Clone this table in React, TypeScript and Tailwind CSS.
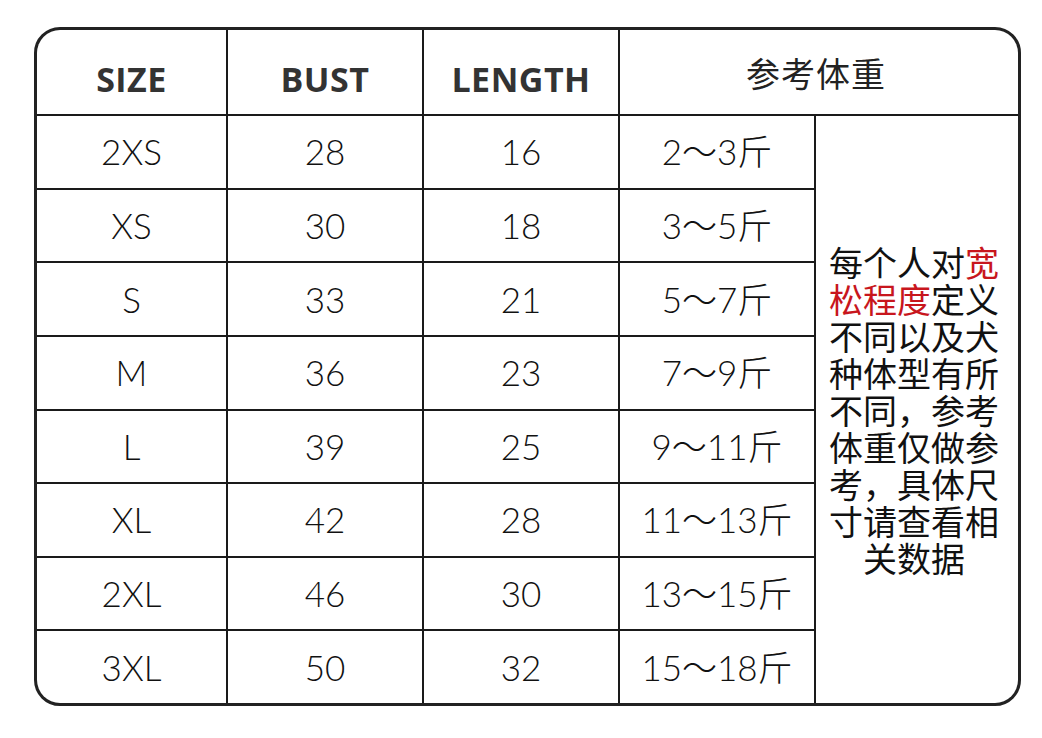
import React from 'react';

const rows = [
  ['2XS', '28', '16', '2～3斤'],
  ['XS', '30', '18', '3～5斤'],
  ['S', '33', '21', '5～7斤'],
  ['M', '36', '23', '7～9斤'],
  ['L', '39', '25', '9～11斤'],
  ['XL', '42', '28', '11～13斤'],
  ['2XL', '46', '30', '13～15斤'],
  ['3XL', '50', '32', '15～18斤'],
];

const cell = 'bg-white flex items-center justify-center text-[#111] text-[35px] font-light leading-none';

export default function App() {
  return (
    <div className="min-h-screen w-full bg-white pl-[34px] pt-[27px]" style={{ fontFamily: 'Lato, "Noto Sans CJK SC", sans-serif' }}>
      <div className="w-[987px] h-[679px] border-[3px] border-[#222] rounded-[26px] overflow-hidden bg-[#1a1a1a]">
        <div className="grid h-full gap-[2px] grid-cols-[189px_194px_194px_194px_1fr] grid-rows-[84px_repeat(8,1fr)]">
          {['SIZE', 'BUST', 'LENGTH'].map((h) => (
            <div
              key={h}
              className="bg-white flex items-center justify-center pt-[15px] text-[34px] font-bold text-[#333] tracking-[0.5px]"
              style={{ fontFamily: '"Open Sans", sans-serif' }}
            >
              {h}
            </div>
          ))}
          <div
            className="col-span-2 bg-white flex items-center justify-center pr-[6px] text-[34px] text-[#222] tracking-[1px]"
            style={{ fontFamily: '"Noto Sans CJK SC", sans-serif' }}
          >
            参考体重
          </div>

          {rows.map((r, i) => (
            <React.Fragment key={r[0]}>
              <div className={cell}>{r[0]}</div>
              <div className={cell}>{r[1]}</div>
              <div className={cell}>{r[2]}</div>
              <div className={cell}>{r[3]}</div>
              {i === 0 && (
                <div
                  className="row-span-8 bg-white flex items-center justify-center pr-[6px] text-[34px] leading-[37px] text-[#111] text-center"
                  style={{ fontFamily: '"Noto Sans CJK SC", sans-serif' }}
                >
                  <p className="w-[176px]">
                    每个人对<span className="text-[#c8161d]">宽松程度</span>定义不同以及犬种体型有所不同，参考体重仅做参考，具体尺寸请查看相关数据
                  </p>
                </div>
              )}
            </React.Fragment>
          ))}
        </div>
      </div>
    </div>
  );
}
